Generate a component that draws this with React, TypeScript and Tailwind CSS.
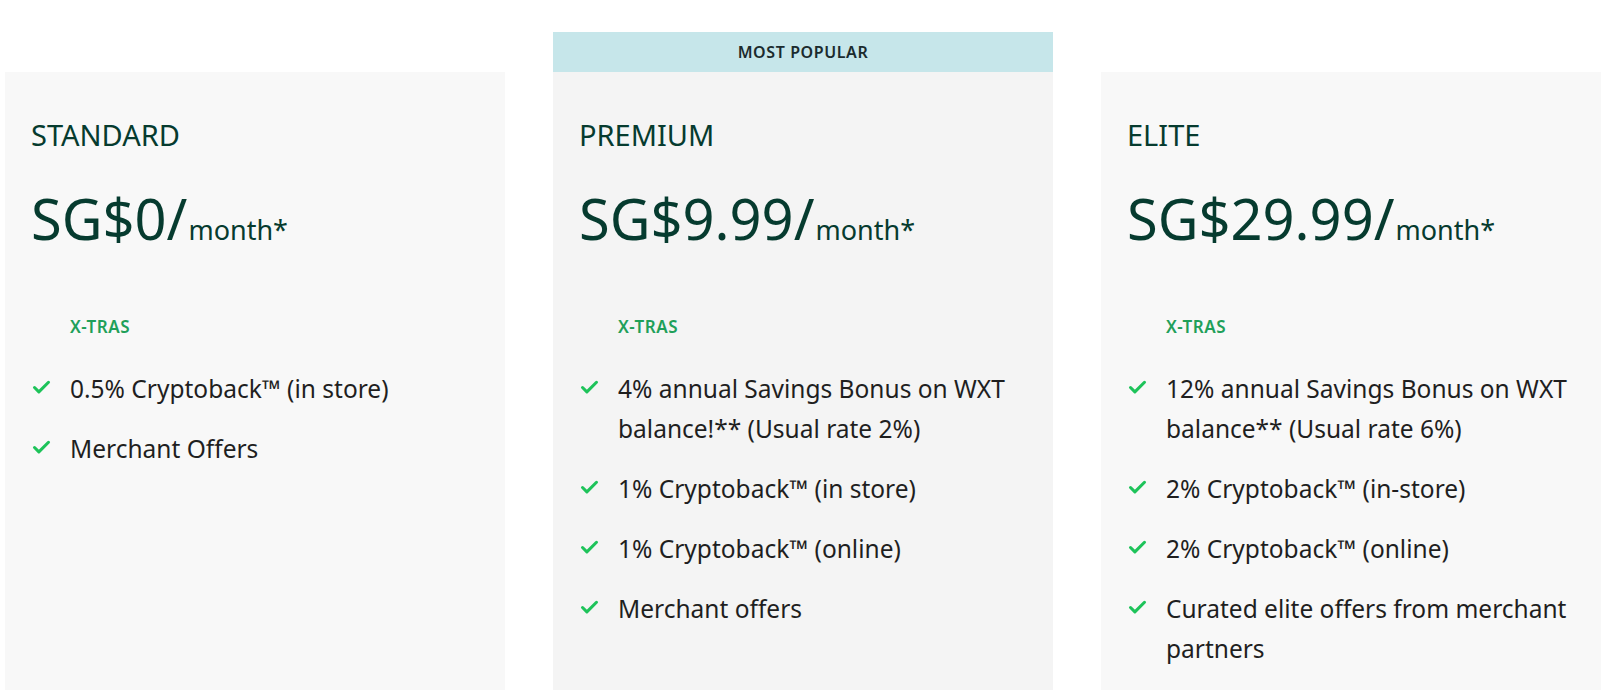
import { Check } from 'lucide-react'

type Plan = {
  name: string
  price: string
  items: string[]
  popular?: boolean
}

const plans: Plan[] = [
  {
    name: 'STANDARD',
    price: 'SG$0/',
    items: ['0.5% Cryptoback™ (in store)', 'Merchant Offers'],
  },
  {
    name: 'PREMIUM',
    price: 'SG$9.99/',
    popular: true,
    items: [
      '4% annual Savings Bonus on WXT balance!** (Usual rate 2%)',
      '1% Cryptoback™ (in store)',
      '1% Cryptoback™ (online)',
      'Merchant offers',
    ],
  },
  {
    name: 'ELITE',
    price: 'SG$29.99/',
    items: [
      '12% annual Savings Bonus on WXT balance** (Usual rate 6%)',
      '2% Cryptoback™ (in-store)',
      '2% Cryptoback™ (online)',
      'Curated elite offers from merchant partners',
    ],
  },
]

function PlanCard({ plan }: { plan: Plan }) {
  return (
    <div className="flex w-[500px] flex-col">
      {plan.popular ? (
        <div className="flex h-[40px] items-center justify-center bg-[#c6e6ea] text-[16px] font-semibold tracking-[0.6px] text-[#1b2b2e]">
          MOST POPULAR
        </div>
      ) : (
        <div className="h-[40px]" />
      )}
      <div className={`h-[640px] pl-[26px] pr-[18px] pt-[45px] ${plan.popular ? 'bg-[#f4f4f4]' : 'bg-[#f8f8f8]'}`}>
        <h2 className="text-[29px] leading-[36px] text-[#063b2f]">{plan.name}</h2>
        <div className="mt-[33px] flex items-baseline leading-[64px] text-[#063b2f]">
          <span className="text-[56px]">{plan.price}</span>
          <span className="ml-[1px] text-[27px]">month*</span>
        </div>
        <p className="mt-[55px] pl-[39px] text-[17px] font-semibold leading-[20px] tracking-[0.5px] text-[#1fa05a]">X-TRAS</p>
        <ul className="mt-[32px] flex flex-col gap-[20px]">
          {plan.items.map((item) => (
            <li key={item} className="flex items-start text-[24.5px] leading-[40px] text-[#1f1f1f]">
              <Check className="mt-[8px] ml-[0px] h-[21px] w-[21px] shrink-0 text-[#1ec35a]" strokeWidth={3.5} />
              <span className="ml-[18px]">{item}</span>
            </li>
          ))}
        </ul>
      </div>
    </div>
  )
}

export default function App() {
  return (
    <div className="h-[690px] overflow-hidden bg-white font-['Noto_Sans',sans-serif]">
      <div className="flex gap-[48px] pl-[5px] pt-[32px]">
        {plans.map((plan) => (
          <PlanCard key={plan.name} plan={plan} />
        ))}
      </div>
    </div>
  )
}
